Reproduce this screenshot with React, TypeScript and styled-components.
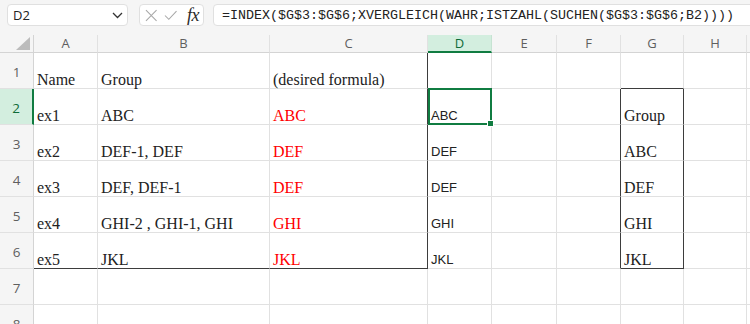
import React from "react";
import styled, { createGlobalStyle } from "styled-components";

const GlobalStyle = createGlobalStyle`
  html, body { margin: 0; padding: 0; background: #f5f5f5; }
  body { width: 750px; height: 324px; overflow: hidden; font-family: "Liberation Sans", Arial, sans-serif; }
`;

const Page = styled.div`
  width: 750px;
  height: 324px;
  overflow: hidden;
  display: flex;
  flex-direction: column;
`;

const FormulaBar = styled.div`
  height: 35px;
  flex: none;
  display: flex;
  align-items: flex-start;
  padding: 4px 0 0 7px;
  box-sizing: border-box;
  background: #f5f5f5;
`;

const Box = styled.div`
  height: 22px;
  box-sizing: border-box;
  background: #ffffff;
  border: 1px solid #e0e0e0;
  border-radius: 4px;
  display: flex;
  align-items: center;
`;

const NameBox = styled(Box)`
  width: 121px;
  padding: 0 4px 0 5px;
  justify-content: space-between;
  font-family: "Open Sans", "Liberation Sans", sans-serif;
  font-size: 13px;
  color: #222;
`;

const IconBox = styled(Box)`
  width: 65px;
  margin-left: 11px;
  padding: 0 4px 0 5px;
  gap: 6px;
`;

const Fx = styled.span`
  font-family: "Liberation Serif", "Times New Roman", serif;
  font-style: italic;
  font-size: 18px;
  color: #2a2a2a;
  margin-left: 4px;
  letter-spacing: -0.5px;
`;

const FormulaInput = styled(Box)`
  flex: 1;
  margin-left: 9px;
  margin-right: -20px;
  padding-left: 8px;
  font-family: "Liberation Mono", "Courier New", monospace;
  font-size: 13.33px;
  color: #222;
  white-space: nowrap;
  overflow: hidden;
`;

const Sheet = styled.div<{ $cols: string }>`
  display: grid;
  grid-template-columns: ${(p) => p.$cols};
  grid-auto-rows: 36px;
  grid-template-rows: 18px;
  background: #ffffff;
`;

const Corner = styled.div`
  position: relative;
  background: #f5f5f5;
  border-right: 1px solid #d4d4d4;
  border-bottom: 1px solid #d4d4d4;
  box-sizing: border-box;
  &::after {
    content: "";
    position: absolute;
    right: 3px;
    bottom: 2px;
    width: 14px;
    height: 13px;
    background: #bcbcbc;
    clip-path: polygon(100% 0, 100% 100%, 0 100%);
  }
`;

const ColHeader = styled.div<{ $active?: boolean }>`
  box-sizing: border-box;
  background: ${(p) => (p.$active ? "#d3eedf" : "#f5f5f5")};
  color: ${(p) => (p.$active ? "#0e6b38" : "#5f5f5f")};
  border-right: 1px solid ${(p) => (p.$active ? "#c6e3d2" : "#e1e1e1")};
  border-bottom: ${(p) => (p.$active ? "2px solid #107c41" : "1px solid #d4d4d4")};
  font-family: "Open Sans", "Liberation Sans", sans-serif;
  font-size: 13px;
  display: flex;
  align-items: center;
  justify-content: center;
  line-height: 1;
`;

const RowHeader = styled.div<{ $active?: boolean }>`
  box-sizing: border-box;
  background: ${(p) => (p.$active ? "#d3eedf" : "#f5f5f5")};
  color: ${(p) => (p.$active ? "#0e6b38" : "#5f5f5f")};
  border-right: ${(p) => (p.$active ? "2px solid #107c41" : "1px solid #d4d4d4")};
  border-bottom: 1px solid #e1e1e1;
  font-family: "Open Sans", "Liberation Sans", sans-serif;
  font-size: 13.5px;
  display: flex;
  align-items: center;
  justify-content: center;
  padding-top: 2px;
`;

const Cell = styled.div<{
  $rDark?: boolean;
  $bDark?: boolean;
  $sans?: boolean;
  $red?: boolean;
}>`
  position: relative;
  box-sizing: border-box;
  border-right: 1px solid ${(p) => (p.$rDark ? "#3d3d3d" : "#e1e1e1")};
  border-bottom: 1px solid ${(p) => (p.$bDark ? "#3d3d3d" : "#e1e1e1")};
  display: flex;
  align-items: flex-end;
  padding: 0 2px 0 3px;
  white-space: nowrap;
  font-family: ${(p) =>
    p.$sans
      ? `"Liberation Sans", Arial, sans-serif`
      : `"Liberation Serif", "Times New Roman", serif`};
  font-size: ${(p) => (p.$sans ? "13px" : "16px")};
  line-height: ${(p) => (p.$sans ? "16px" : "17px")};
  color: ${(p) => (p.$red ? "#ff0000" : "#222222")};
`;

const Selection = styled.div`
  position: absolute;
  left: 0;
  top: -1px;
  right: -1px;
  bottom: -1px;
  border: 2px solid #107c41;
  box-sizing: border-box;
  z-index: 2;
  pointer-events: none;
  &::after {
    content: "";
    position: absolute;
    right: -4px;
    bottom: -4px;
    width: 5px;
    height: 5px;
    background: #107c41;
    border: 1px solid #ffffff;
  }
`;

const COLS = [
  { k: "A", w: 64 },
  { k: "B", w: 172 },
  { k: "C", w: 158 },
  { k: "D", w: 64 },
  { k: "E", w: 65 },
  { k: "F", w: 64 },
  { k: "G", w: 63 },
  { k: "H", w: 63 },
  { k: "", w: 64 },
];

type Row = Record<string, string>;

const ROWS: Row[] = [
  { A: "Name", B: "Group", C: "(desired formula)" },
  { A: "ex1", B: "ABC", C: "ABC", D: "ABC", G: "Group" },
  { A: "ex2", B: "DEF-1, DEF", C: "DEF", D: "DEF", G: "ABC" },
  { A: "ex3", B: "DEF, DEF-1", C: "DEF", D: "DEF", G: "DEF" },
  { A: "ex4", B: "GHI-2 , GHI-1, GHI", C: "GHI", D: "GHI", G: "GHI" },
  { A: "ex5", B: "JKL", C: "JKL", D: "JKL", G: "JKL" },
  {},
  {},
];

const Chevron = () => (
  <svg width="11" height="7" viewBox="0 0 11 7">
    <path d="M1 1 L5.5 5.5 L10 1" fill="none" stroke="#333" strokeWidth="1.3" />
  </svg>
);

const Cross = () => (
  <svg width="13" height="13" viewBox="0 0 13 13">
    <path d="M1 1 L12 12 M12 1 L1 12" fill="none" stroke="#a8a8a8" strokeWidth="1.1" />
  </svg>
);

const Check = () => (
  <svg width="14" height="11" viewBox="0 0 14 11">
    <path d="M1 5.5 L5 9.5 L13 1" fill="none" stroke="#a8a8a8" strokeWidth="1.1" />
  </svg>
);

export default function App() {
  const template = `34px ${COLS.map((c) => c.w + "px").join(" ")}`;
  return (
    <Page>
      <GlobalStyle />
      <FormulaBar>
        <NameBox>
          <span>D2</span>
          <Chevron />
        </NameBox>
        <IconBox>
          <Cross />
          <Check />
          <Fx>fx</Fx>
        </IconBox>
        <FormulaInput>
          =INDEX($G$3:$G$6;XVERGLEICH(WAHR;ISTZAHL(SUCHEN($G$3:$G$6;B2))))
        </FormulaInput>
      </FormulaBar>
      <Sheet $cols={template}>
        <Corner />
        {COLS.map((c, ci) => (
          <ColHeader key={ci} $active={c.k === "D"}>
            {c.k}
          </ColHeader>
        ))}
        {ROWS.map((row, i) => {
          const r = i + 1;
          return (
            <React.Fragment key={r}>
              <RowHeader $active={r === 2}>{r}</RowHeader>
              {COLS.map((c, ci) => {
                const k = c.k;
                const rDark =
                  (k === "C" && r >= 1 && r <= 6) ||
                  ((k === "F" || k === "G") && r >= 2 && r <= 6);
                const bDark =
                  (["A", "B", "C"].includes(k) && r === 6) ||
                  (k === "G" && (r === 1 || r === 6));
                return (
                  <Cell
                    key={ci}
                    $rDark={rDark}
                    $bDark={bDark}
                    $sans={k === "D"}
                    $red={k === "C" && r >= 2}
                  >
                    {(k && row[k]) || ""}
                    {k === "D" && r === 2 && <Selection />}
                  </Cell>
                );
              })}
            </React.Fragment>
          );
        })}
      </Sheet>
    </Page>
  );
}
